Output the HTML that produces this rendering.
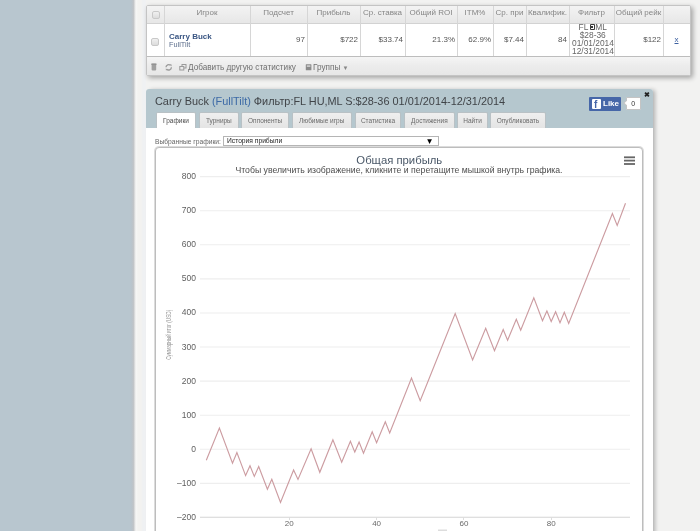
<!DOCTYPE html>
<html><head><meta charset="utf-8">
<style>
*{box-sizing:border-box;margin:0;padding:0}
html,body{width:700px;height:531px;overflow:hidden;-webkit-font-smoothing:antialiased;background:#f2f2f1;font-family:"Liberation Sans",sans-serif;position:relative}
.a{position:absolute;white-space:nowrap;will-change:transform}
#side{left:0;top:0;width:130px;height:531px;background:#b8c6cf}
#sideSh{left:130px;top:0;width:16px;height:531px;background:linear-gradient(to right,#b8c6cf 0px,#bac3ca 2px,#c2c5c8 3.5px,#e4e4e4 5px,#f7f7f6 6px,#f3f2f0 8px,#f3f2f0 11px,#eff1f3 13px,#f0f1f3 16px)}
#tbl{left:146px;top:5px;width:545px;height:71px;border:1px solid #c4c4c4;background:#fff;box-shadow:2px 2px 5px rgba(0,0,0,.33);border-radius:2px;overflow:hidden}
#thead{left:0;top:0;width:100%;height:18px;background:linear-gradient(#f3f3f3,#e7e7e7);border-bottom:1px solid #d2d2d2}
#tfoot{left:0;top:50px;width:100%;height:20px;background:linear-gradient(#f5f5f5,#ececec 45%,#e6e6e6);border-top:1px solid #bdbdbd}
.vl{position:absolute;top:0;width:1px;height:50px;background:#d6d6d6}
.th{position:absolute;top:0;height:14px;line-height:13.5px;font-size:8px;color:#858585;text-align:center}
.td{position:absolute;top:18px;height:32px;line-height:32px;font-size:8px;color:#555;text-align:right;padding-right:2px}
.cb{position:absolute;width:8px;height:8px;border:1px solid #c8c8c8;border-radius:2px;background:linear-gradient(#f0f0f0,#dcdcdc)}
#panel{left:146px;top:89px;width:507px;height:460px;background:#fff;border-radius:3px 3px 0 0;box-shadow:3px 0 4px -1px rgba(0,0,0,.28)}
#pin{position:absolute;left:-1px;top:0;width:0;height:0}
#phead{left:0;top:0;width:100%;height:39px;background:#b5c7ce;border-radius:3px 3px 0 0}
.tab{position:absolute;top:23px;height:16px;line-height:15.2px;font-size:6.5px;color:#6a6a6a;text-align:center;background:linear-gradient(#efefef,#e4e4e4);border:1px solid #b9c1c5;border-bottom:none;border-radius:2px 2px 0 0}
.tab.on{background:#fff;color:#4a4a4a}
#chart{left:8.5px;top:57.5px;width:488px;height:420px;border:1px solid #bdbdbd;border-radius:4px;background:#fff;box-shadow:0 0 0 1px #dcdcdc}
</style></head><body>
<div class="a" id="side"></div>
<div class="a" id="sideSh"></div>

<div class="a" id="tbl">
  <div class="a" id="thead"></div>
  <div class="a" id="tfoot"></div>
  <div class="vl" style="left:17px"></div>
  <div class="vl" style="left:103px"></div>
  <div class="vl" style="left:160px"></div>
  <div class="vl" style="left:213px"></div>
  <div class="vl" style="left:258px"></div>
  <div class="vl" style="left:310px"></div>
  <div class="vl" style="left:346px"></div>
  <div class="vl" style="left:379px"></div>
  <div class="vl" style="left:422px"></div>
  <div class="vl" style="left:467px"></div>
  <div class="vl" style="left:516px"></div>
  <div class="th" style="left:17px;width:86px">Игрок</div>
  <div class="th" style="left:103px;width:57px">Подсчет</div>
  <div class="th" style="left:160px;width:53px">Прибыль</div>
  <div class="th" style="left:213px;width:45px">Ср. ставка</div>
  <div class="th" style="left:258px;width:52px">Общий ROI</div>
  <div class="th" style="left:310px;width:36px">ITM%</div>
  <div class="th" style="left:346px;width:33px">Ср. при</div>
  <div class="th" style="left:379px;width:43px">Квалифик.</div>
  <div class="th" style="left:422px;width:45px">Фильтр</div>
  <div class="th" style="left:467px;width:49px">Общий рейк</div>
  <div class="td" style="left:103px;width:57px">97</div>
  <div class="td" style="left:160px;width:53px">$722</div>
  <div class="td" style="left:213px;width:45px">$33.74</div>
  <div class="td" style="left:258px;width:52px">21.3%</div>
  <div class="td" style="left:310px;width:36px">62.9%</div>
  <div class="td" style="left:346px;width:33px">$7.44</div>
  <div class="td" style="left:379px;width:43px">84</div>
  <div class="td" style="left:467px;width:49px">$122</div>
  
  <svg class="a" style="left:0;top:0" width="543" height="69" viewBox="147 6 543 69">
    <g fill="#a0a0a0"><rect x="151.6" y="63.8" width="4.6" height="6.8" rx="1"/><rect x="151.2" y="63.6" width="5.4" height="1.2" rx="0.5" fill="#8e8e8e"/></g>
    <g fill="none" stroke="#9a9a9a" stroke-width="1.3">
      <path d="M166 67.3a2.7 2.7 0 0 1 4.6-1.9"/>
      <path d="M171.4 67.3a2.7 2.7 0 0 1-4.6 1.9"/>
    </g>
    <path d="M169.8 64.3l1.8 .1-.1 2z M167.6 70.3l-1.8-.1.1-2z" fill="#9a9a9a"/>
    <g fill="none" stroke="#9a9a9a" stroke-width="1">
      <rect x="182" y="64.5" width="4" height="3.5"/>
      <rect x="179.8" y="66.5" width="4" height="3.5" fill="#ececec"/>
    </g>
    <rect x="305.8" y="64.3" width="5.6" height="6" fill="#8a8a8a" rx="0.5"/>
    <rect x="306.8" y="65.3" width="3.6" height="1.6" fill="#d0d0d0"/>
  </svg>
  <div class="a" style="left:41px;top:56px;font-size:8.2px;color:#707070;line-height:11px">Добавить другую статистику</div>
  <div class="a" style="left:166px;top:56px;font-size:8.2px;color:#707070;line-height:11px">Группы <span style="font-size:6px;color:#888">&#9660;</span></div>
<div class="cb" style="left:5px;top:5px"></div>
  <div class="cb" style="left:4px;top:31.5px"></div>
  <div class="a" style="left:22px;top:25.7px;font-size:8px;font-weight:bold;color:#3a5683">Carry Buck</div>
  <div class="a" style="left:22px;top:33.6px;font-size:7.3px;color:#5d6e8c">FullTilt</div>
  <div class="a" style="left:422px;top:17.3px;width:44.5px;height:32.7px;font-size:8.4px;line-height:8.1px;color:#666;text-align:center;overflow:hidden;padding:0 0 0 3px">FL<span style="display:inline-block;width:5px;height:6px;background:#3a3a3a;vertical-align:0;position:relative;top:0;margin:0 0 0 2px;border-radius:1px"><span style="position:absolute;left:1px;top:1px;width:3px;height:4px;border-top:1px solid #fff;border-right:1px solid #fff;border-bottom:1px solid #fff"></span></span>ML<br>$28-36<br>01/01/2014<br>12/31/2014</div>
  <div class="a" style="left:516px;top:17px;width:27px;height:33px;line-height:33px;text-align:center;font-size:8px;color:#3b5fa0;text-decoration:underline">x</div>

</div>

<div class="a" id="panel">
  <div class="a" id="phead"></div><div id="pin">
  <div class="a" style="left:10.2px;top:5.3px;font-size:10.9px;line-height:14px;color:#404448">Carry Buck <span style="color:#3d6aa6">(FullTilt)</span> Фильтр:FL HU,ML S:$28-36 01/01/2014-12/31/2014</div>
  <div class="tab on" style="left:11.3px;width:39.4px">Графики</div>
  <div class="tab" style="left:53.6px;width:40.5px">Турниры</div>
  <div class="tab" style="left:95.9px;width:48.5px">Оппоненты</div>
  <div class="tab" style="left:146.7px;width:60px">Любимые игры</div>
  <div class="tab" style="left:209.6px;width:46.8px">Статистика</div>
  <div class="tab" style="left:258.7px;width:51.4px">Достижения</div>
  <div class="tab" style="left:312.4px;width:30.3px">Найти</div>
  <div class="tab" style="left:345px;width:56px">Опубликовать</div>
  <div class="a" style="left:444.3px;top:8px;width:32px;height:14px;background:#4666a8;border-radius:1px"></div>
  <div class="a" style="left:446.5px;top:10px;width:9px;height:10px;background:#fff;border-radius:1px"></div>
  <div class="a" style="left:448.8px;top:9.5px;font-size:10px;font-weight:bold;color:#4666a8;line-height:12px">f</div>
  <div class="a" style="left:458px;top:8px;font-size:8px;font-weight:bold;color:#fff;line-height:14px">Like</div>
  <div class="a" style="left:481px;top:8.4px;width:14.5px;height:13px;background:#fff;border:1px solid #c4c4c4;border-radius:1px;font-size:7px;color:#333;text-align:center;line-height:11px">0</div>
  <div class="a" style="left:478.5px;top:12px;width:4px;height:4px;background:#fff;border-left:1px solid #c4c4c4;border-bottom:1px solid #c4c4c4;transform:rotate(45deg)"></div>
  <div class="a" style="left:499px;top:1.8px;font-size:7px;font-weight:bold;color:#222;line-height:8px">&#10006;</div>
  <div class="a" style="left:10.3px;top:47px;font-size:6.7px;line-height:11px;color:#666">Выбранные графики:</div>
  <div class="a" style="left:78px;top:47px;width:215.6px;height:10px;border:1px solid #b5b5b5;background:#fff;font-size:6.7px;line-height:8px;color:#222;padding-left:3px">История прибыли<span style="position:absolute;right:4px;top:0.5px;font-size:8.2px;line-height:8px;color:#000">&#9660;</span></div>

  </div><div class="a" id="chart"></div>
</div>

<svg class="a" style="left:0;top:0" width="700" height="531" viewBox="0 0 700 531">
  <g stroke="#eeeeee" stroke-width="1.1"><line x1="200" y1="176.60" x2="630" y2="176.60"/><line x1="200" y1="210.69" x2="630" y2="210.69"/><line x1="200" y1="244.78" x2="630" y2="244.78"/><line x1="200" y1="278.87" x2="630" y2="278.87"/><line x1="200" y1="312.96" x2="630" y2="312.96"/><line x1="200" y1="347.05" x2="630" y2="347.05"/><line x1="200" y1="381.14" x2="630" y2="381.14"/><line x1="200" y1="415.23" x2="630" y2="415.23"/><line x1="200" y1="449.32" x2="630" y2="449.32"/><line x1="200" y1="483.41" x2="630" y2="483.41"/></g>
  <line x1="200" y1="517.3" x2="630" y2="517.3" stroke="#d4d4d4" stroke-width="1.1"/>
  <g stroke="#dddddd" stroke-width="1">
    <line x1="289.5" y1="517" x2="289.5" y2="520"/><line x1="376.5" y1="517" x2="376.5" y2="520"/><line x1="463.5" y1="517" x2="463.5" y2="520"/><line x1="551.5" y1="517" x2="551.5" y2="520"/>
  </g>
  <g font-family="Liberation Sans" font-size="8.5px" fill="#606060" text-anchor="end"><text x="196" y="178.9">800</text><text x="196" y="213.0">700</text><text x="196" y="247.1">600</text><text x="196" y="281.3">500</text><text x="196" y="315.4">400</text><text x="196" y="349.5">300</text><text x="196" y="383.6">200</text><text x="196" y="417.7">100</text><text x="196" y="451.9">0</text><text x="196" y="486.0">–100</text><text x="196" y="520.0">–200</text></g>
  <g font-family="Liberation Sans" font-size="8px" fill="#6a6a6a" text-anchor="middle"><text x="289.2" y="526">20</text><text x="376.6" y="526">40</text><text x="463.9" y="526">60</text><text x="551.3" y="526">80</text></g>
  <text x="-334.8" y="171" transform="rotate(-90)" font-family="Liberation Sans" font-size="7px" fill="#959595" text-anchor="middle" textLength="50" lengthAdjust="spacingAndGlyphs">Суммарный итог (USD)</text>
  <text x="399.3" y="163.8" font-family="Liberation Sans" font-size="11.3px" fill="#4a5868" text-anchor="middle">Общая прибыль</text>
  <text x="399" y="173.3" font-family="Liberation Sans" font-size="8.7px" fill="#4d4d4d" text-anchor="middle">Чтобы увеличить изображение, кликните и перетащите мышкой внутрь графика.</text>
  <g fill="#666"><rect x="624" y="156.4" width="11" height="1.8"/><rect x="624" y="159.7" width="11" height="1.8"/><rect x="624" y="163.1" width="11" height="1.8"/></g>
  <polyline points="206.3,460.2 219.4,428.0 232.5,463.2 236.9,452.5 245.6,475.6 250.0,465.8 254.3,476.4 258.7,466.6 267.4,489.2 271.8,479.3 280.5,502.5 293.6,470.0 298.0,479.4 311.1,448.7 319.8,472.3 332.9,439.9 341.7,462.3 350.4,441.2 354.8,452.1 359.1,442.1 363.5,453.1 372.2,431.8 376.6,442.7 385.3,421.7 389.7,433.0 411.5,378.1 420.2,400.8 455.2,313.6 472.6,360.0 485.7,328.3 494.5,350.8 503.2,329.5 507.6,340.2 516.3,319.3 520.7,330.3 533.8,297.8 542.5,320.7 546.9,311.0 551.2,321.5 555.6,311.7 560.0,322.7 564.3,312.3 568.7,323.4 612.4,213.6 617.2,225.4 625.5,203.2" fill="none" stroke="#cc9ca1" stroke-width="1.15" stroke-linejoin="miter"/>
  <rect x="438" y="529.5" width="9" height="3" fill="#ddd"/>
</svg>
</body></html>
